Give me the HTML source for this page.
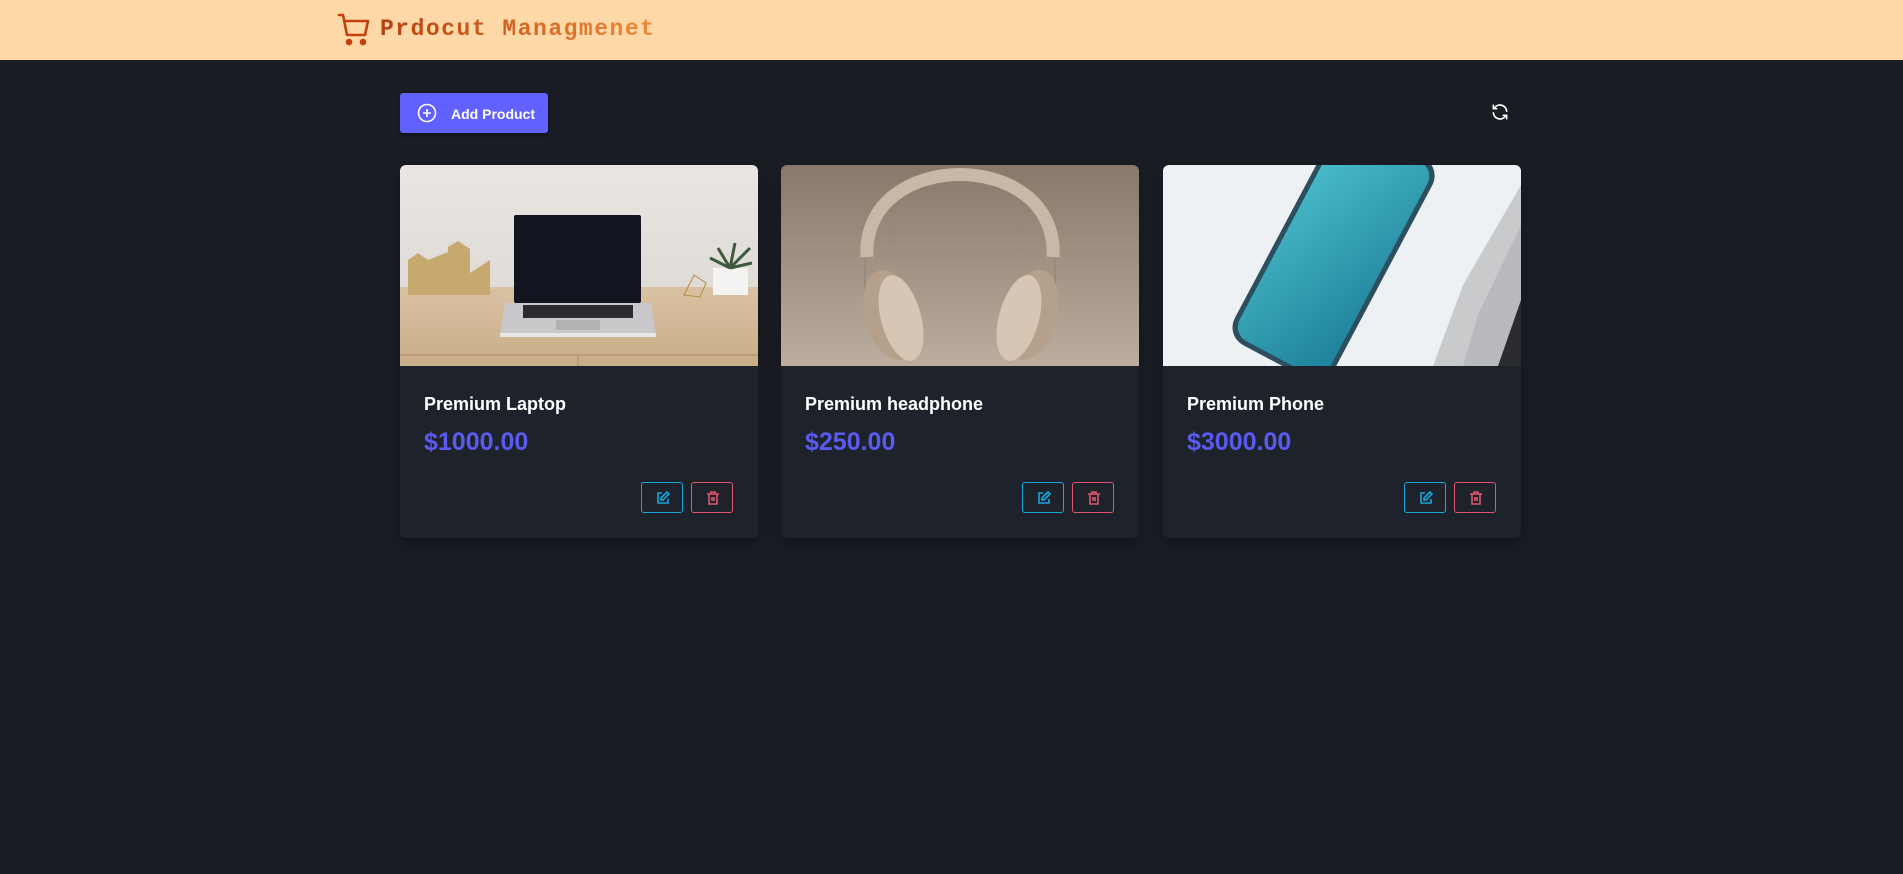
<!DOCTYPE html>
<html><head><meta charset="utf-8"><style>
*{margin:0;padding:0;box-sizing:border-box}
body{width:1903px;height:874px;background:#1a1d24;font-family:"Liberation Sans",sans-serif;position:relative;overflow:hidden}
.hdr{position:absolute;left:0;top:0;width:1903px;height:60px;background:#ffd8a8}
.logo{position:absolute;left:337px;top:12px}
.ttl{position:absolute;left:380px;top:16px;font-family:"Liberation Mono",monospace;font-weight:bold;font-size:23px;letter-spacing:1.5px;background:linear-gradient(90deg,#b5400f,#f08a3a);-webkit-background-clip:text;color:transparent;white-space:pre}
.add{position:absolute;left:400px;top:93px;width:148px;height:40px;background:#6161ff;border-radius:3px;color:#fff;font-weight:bold;font-size:14px;box-shadow:0 2px 4px rgba(0,0,0,.4)}
.add svg{position:absolute;left:17px;top:10px}
.add span{position:absolute;left:51px;top:13px}
.ref{position:absolute;left:1490px;top:102px}
.card{position:absolute;top:165px;width:358px;height:373px;background:#1e232b;border-radius:6px;overflow:hidden;box-shadow:0 6px 14px rgba(0,0,0,.3)}
.card svg.img{position:absolute;left:0;top:0}
.name{position:absolute;left:24px;top:229px;color:#fff;font-weight:bold;font-size:18px}
.price{position:absolute;left:24px;top:263px;color:#5a5af0;font-weight:bold;font-size:25px}
.b{position:absolute;top:317px;width:42px;height:31px;border:1px solid;border-radius:3px}
.b svg{position:absolute;left:13px;top:7px}
.e{left:241px;border-color:#19a8dd}
.d{left:291px;border-color:#e0566b}
</style></head><body>
<div class="hdr">
<svg class="logo" width="34" height="34" viewBox="0 0 34 34" fill="none" stroke="#c2410c" stroke-width="2.6" stroke-linecap="round" stroke-linejoin="round"><path d="M2 3h4l4 20h18l3-14H8"/><circle cx="12" cy="30" r="2" fill="#c2410c"/><circle cx="26" cy="30" r="2" fill="#c2410c"/></svg>
<div class="ttl">Prdocut Managmenet</div>
</div>
<div class="add"><svg width="20" height="20" viewBox="0 0 20 20" fill="none" stroke="#fff" stroke-width="1.6"><circle cx="10" cy="10" r="8.5"/><path d="M10 6v8M6 10h8"/></svg><span>Add Product</span></div>
<svg class="ref" width="20" height="20" viewBox="0 0 24 24" fill="none" stroke="#fff" stroke-width="2" stroke-linecap="round" stroke-linejoin="round"><path d="M20 11A8 8 0 0 0 5.5 7M4 4v4h4"/><path d="M4 13a8 8 0 0 0 14.5 4M20 20v-4h-4"/></svg>

<div class="card" style="left:400px">
<svg class="img" width="358" height="201" viewBox="0 0 358 201">
<defs><linearGradient id="w" x1="0" y1="0" x2="0" y2="1"><stop offset="0" stop-color="#e9e6e2"/><stop offset="1" stop-color="#d8d4cf"/></linearGradient><linearGradient id="wd" x1="0" y1="0" x2="0" y2="1"><stop offset="0" stop-color="#d9c2a3"/><stop offset="1" stop-color="#c9ad88"/></linearGradient></defs>
<rect width="358" height="201" fill="url(#w)"/>
<rect y="122" width="358" height="79" fill="url(#wd)"/>
<path d="M0 190H358" stroke="#a88c6a"/><path d="M178 190V201" stroke="#a88c6a"/>
<path d="M8 95l10-7 10 7V130H8zM28 95l20-8V130H28zM48 82l10-6 12 8V130H48zM70 108l20-13V130H70z" fill="#c7a96f"/>
<rect x="313" y="103" width="35" height="27" fill="#f3f3f2"/>
<path d="M330 103l-12-20M330 103l5-25M330 103l20-20M330 103l-20-10M330 103l22-5" stroke="#3e5a3c" stroke-width="3"/>
<path d="M284 130l10-20 12 8-6 14z" fill="none" stroke="#b58a4a"/>
<rect x="114" y="50" width="127" height="88" rx="2" fill="#121520"/>
<path d="M105 138H251L256 170H100z" fill="#c9c9cb"/>
<rect x="123" y="140" width="110" height="13" fill="#2a2b30"/>
<rect x="156" y="155" width="44" height="10" fill="#b2b2b5"/>
<rect x="100" y="168" width="156" height="4" fill="#e7e7e8"/>
</svg>
<div class="name">Premium Laptop</div><div class="price">$1000.00</div>
<div class="b e"><svg width="16" height="16" viewBox="0 0 16 16" fill="none" stroke="#19a8dd" stroke-width="1.6"><path d="M7 3H3v10h10V9"/><path d="M12 2l2 2-6 6H6V8z"/></svg></div>
<div class="b d"><svg width="16" height="16" viewBox="0 0 16 16" fill="none" stroke="#e0566b" stroke-width="1.6"><path d="M2 4h12M6 4V2h4v2M4 4v10h8V4M7 7v4M9 7v4"/></svg></div>
</div>

<div class="card" style="left:781px">
<svg class="img" width="358" height="201" viewBox="0 0 358 201">
<defs><linearGradient id="h" x1="0" y1="0" x2="0" y2="1"><stop offset="0" stop-color="#87786a"/><stop offset="1" stop-color="#bcad9f"/></linearGradient></defs>
<rect width="358" height="201" fill="url(#h)"/>
<path d="M86 92C80 -18 278 -18 272 92" fill="none" stroke="#c8b8a5" stroke-width="13"/>
<path d="M84 92V130M274 92V130" stroke="#9a8a78" stroke-width="2"/>
<ellipse cx="110" cy="150" rx="26" ry="46" transform="rotate(-15 110 150)" fill="#b4a08b"/>
<ellipse cx="120" cy="153" rx="20" ry="44" transform="rotate(-15 120 153)" fill="#d6c6b3"/>
<ellipse cx="250" cy="150" rx="26" ry="46" transform="rotate(15 250 150)" fill="#b4a08b"/>
<ellipse cx="238" cy="153" rx="20" ry="44" transform="rotate(15 238 153)" fill="#d6c6b3"/>
</svg>
<div class="name">Premium headphone</div><div class="price">$250.00</div>
<div class="b e"><svg width="16" height="16" viewBox="0 0 16 16" fill="none" stroke="#19a8dd" stroke-width="1.6"><path d="M7 3H3v10h10V9"/><path d="M12 2l2 2-6 6H6V8z"/></svg></div>
<div class="b d"><svg width="16" height="16" viewBox="0 0 16 16" fill="none" stroke="#e0566b" stroke-width="1.6"><path d="M2 4h12M6 4V2h4v2M4 4v10h8V4M7 7v4M9 7v4"/></svg></div>
</div>

<div class="card" style="left:1163px">
<svg class="img" width="358" height="201" viewBox="0 0 358 201">
<defs><linearGradient id="s" x1="0" y1="0" x2="1" y2="1"><stop offset="0" stop-color="#4cc0cc"/><stop offset="1" stop-color="#1d7f9a"/></linearGradient></defs>
<rect width="358" height="201" fill="#eef1f4"/>
<path d="M358 20L300 120L270 201H358z" fill="#c9cacc"/>
<path d="M358 60L315 150L300 201H358z" fill="#b9babd"/>
<path d="M358 135L335 201H358z" fill="#2b2c30"/>
<g transform="rotate(28 165 95)"><rect x="110" y="-40" width="112" height="250" rx="20" fill="#2c4e5e"/><rect x="115" y="-35" width="102" height="240" rx="16" fill="url(#s)"/></g>
</svg>
<div class="name">Premium Phone</div><div class="price">$3000.00</div>
<div class="b e"><svg width="16" height="16" viewBox="0 0 16 16" fill="none" stroke="#19a8dd" stroke-width="1.6"><path d="M7 3H3v10h10V9"/><path d="M12 2l2 2-6 6H6V8z"/></svg></div>
<div class="b d"><svg width="16" height="16" viewBox="0 0 16 16" fill="none" stroke="#e0566b" stroke-width="1.6"><path d="M2 4h12M6 4V2h4v2M4 4v10h8V4M7 7v4M9 7v4"/></svg></div>
</div>
</body></html>
